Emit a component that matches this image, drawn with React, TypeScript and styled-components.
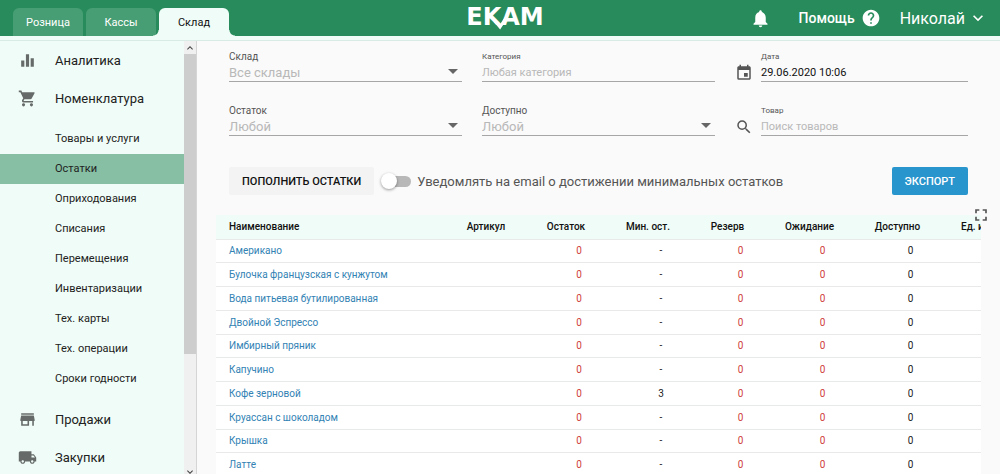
import React from "react";
import styled, { createGlobalStyle, css } from "styled-components";
import {
  MdEqualizer,
  MdEvent,
  MdFullscreen,
  MdHelp,
  MdKeyboardArrowDown,
  MdKeyboardArrowUp,
  MdLocalShipping,
  MdNotifications,
  MdSearch,
  MdShoppingCart,
  MdStore,
} from "react-icons/md";

const green = "#278b5b";
const mint = "#f0fcf7";
const line = "#e8eaea";

const GlobalStyle = createGlobalStyle`
  * { box-sizing: border-box; }
  body {
    margin: 0;
    background: #fafafa;
    color: #222;
    font-family: Roboto, "Liberation Sans", sans-serif;
    font-size: 11px;
  }
  button, input, select { font: inherit; color: inherit; }
  a { text-decoration: none; }
`;

const Page = styled.div`
  display: flex;
  flex-direction: column;
  height: 100vh;
  overflow: hidden;
`;

const Header = styled.header`
  flex: none;
  display: grid;
  grid-template-columns: 1fr auto 1fr;
  height: 36px;
  padding: 0 3px 0 13px;
  background: ${green};
  color: #fff;
`;

const Tabs = styled.nav`
  display: flex;
  align-items: flex-end;
  gap: 3px;
`;

const Tab = styled.a<{ $active?: boolean }>`
  position: relative;
  width: 70px;
  height: 28px;
  border-radius: 6px 6px 0 0;
  background: #489e74;
  color: #fff;
  font-size: 11px;
  line-height: 29px;
  text-align: center;

  ${(p) =>
    p.$active &&
    css`
      background: ${mint};
      color: #111;

      &::before,
      &::after {
        content: "";
        position: absolute;
        bottom: 0;
        width: 6px;
        height: 6px;
      }
      &::before {
        right: 100%;
        background: radial-gradient(circle at 0 0, transparent 5px, ${mint} 6px);
      }
      &::after {
        left: 100%;
        background: radial-gradient(circle at 100% 0, transparent 5px, ${mint} 6px);
      }
    `}
`;

const Logo = styled.a`
  position: relative;
  color: #fff;
  font-family: "DejaVu Sans", sans-serif;
  font-size: 24px;
  font-weight: 700;
  line-height: 34px;

  svg {
    position: absolute;
    left: 26px;
    top: 17px;
  }
`;

const Account = styled.div`
  display: flex;
  align-items: center;
  justify-content: flex-end;
  gap: 1px;
`;

const HeaderButton = styled.button<{ $bold?: boolean; $size?: number; $gap?: number; $pad?: number }>`
  display: flex;
  align-items: center;
  gap: ${(p) => p.$gap ?? 0}px;
  height: 36px;
  padding: 0 ${(p) => p.$pad ?? 9}px;
  border: 0;
  background: none;
  font-size: ${(p) => p.$size ?? 14}px;
  font-weight: ${(p) => (p.$bold ? 500 : 400)};
`;

const Strip = styled.div`
  flex: none;
  height: 5px;
  background: ${mint};
  border-bottom: 1px solid #d8ebe4;
`;

const Body = styled.div`
  flex: 1;
  display: flex;
  min-height: 0;
`;

const Sidebar = styled.nav`
  flex: none;
  width: 184px;
  overflow: hidden;
  background: ${mint};
`;

const Section = styled.a`
  display: flex;
  align-items: center;
  gap: 18px;
  height: 38px;
  padding-left: 18px;
  color: #222;
  font-size: 13px;

  svg { flex: none; color: #666b69; }
`;

const SubList = styled.div`
  padding: 7px 0 6px;
`;

const SubItem = styled.a<{ $active?: boolean }>`
  display: block;
  padding-left: 55px;
  background: ${(p) => (p.$active ? "#86bfa3" : "none")};
  color: #222;
  font-size: 11px;
  line-height: 30px;
`;

const ScrollBar = styled.div`
  flex: none;
  display: flex;
  flex-direction: column;
  width: 13px;
  background: #f0f0f0;
  border-right: 1px solid #d4d6d5;
  color: #444;
`;

const ScrollArrow = styled.span`
  display: flex;
  justify-content: center;
  align-items: center;
  height: 13px;

  &:last-child { height: 4px; }
`;

const ScrollThumb = styled.span`
  height: 300px;
  margin-bottom: auto;
  background: #cdcdcd;
`;

const Main = styled.main`
  flex: 1;
  min-width: 0;
  overflow-y: auto;
  scrollbar-width: none;
`;

const Filters = styled.form`
  display: grid;
  grid-template-columns: repeat(3, 1fr);
  gap: 13px 20px;
  padding: 0 32px;
`;

const FieldBox = styled.div`
  display: flex;
  align-items: flex-end;
  gap: 8px;
  height: 41px;

  > svg { flex: none; color: #555; }
`;

const FieldBody = styled.div`
  position: relative;
  flex: 1;
  display: flex;
  flex-direction: column;
  min-width: 0;
  border-bottom: 1px solid #a6a6a6;
`;

const FieldLabel = styled.label<{ $small?: boolean }>`
  color: #555;
  font-size: ${(p) => (p.$small ? 8 : 10)}px;
  line-height: 14px;
`;

const controlStyle = css`
  width: 100%;
  height: 17px;
  padding: 0;
  border: 0;
  outline: 0;
  background: none;
`;

const TextInput = styled.input`
  ${controlStyle}
  color: #111;
  font-size: 11px;

  &::placeholder { color: #b8b8b8; opacity: 1; }
`;

const Select = styled.select`
  ${controlStyle}
  appearance: none;
  color: #b8b8b8;
  font-size: 13px;
`;

const Caret = styled.span`
  position: absolute;
  right: 4px;
  bottom: 7px;
  border: 5px solid transparent;
  border-top-color: #666;
  border-bottom: 0;
  pointer-events: none;
`;

const Actions = styled.div`
  display: flex;
  align-items: center;
  padding: 31px 32px 20px;
`;

const Button = styled.button<{ $primary?: boolean }>`
  height: 28px;
  padding: 0 13px;
  border: 0;
  border-radius: 2px;
  background: ${(p) => (p.$primary ? "#2895cd" : "#f3f3f3")};
  color: ${(p) => (p.$primary ? "#fff" : "#111")};
  font-size: 11px;
  font-weight: 500;
`;

const SwitchLabel = styled.label`
  flex: 1;
  display: flex;
  align-items: center;
  gap: 6px;
  padding-left: 11px;
  color: #555;
  font-size: 13px;
`;

const Switch = styled.input`
  appearance: none;
  position: relative;
  width: 26px;
  height: 11px;
  margin: 0;
  border-radius: 6px;
  background: #b8b8b8;

  &::before {
    content: "";
    position: absolute;
    left: -4px;
    top: -3px;
    width: 16px;
    height: 16px;
    border-radius: 50%;
    background: #fff;
    box-shadow: 0 1px 3px rgba(0, 0, 0, 0.4);
  }
`;

const TableArea = styled.section`
  position: relative;
  margin: 0 19px;
`;

const TableClip = styled.div`
  overflow: hidden;
`;

const FullscreenButton = styled.button`
  position: absolute;
  right: -10px;
  top: -10px;
  display: flex;
  padding: 0;
  border: 0;
  background: none;
  color: #555;
`;

const Table = styled.table`
  width: calc(100% + 45px);
  table-layout: fixed;
  border-collapse: collapse;
  background: #fff;
  white-space: nowrap;
`;

const HeadCell = styled.th<{ $start?: number }>`
  height: 24px;
  padding: 0 0 0 ${(p) => p.$start ?? 0}px;
  border-bottom: 1px solid ${line};
  background: ${mint};
  color: #111;
  font-size: 10px;
  font-weight: 500;
  text-align: ${(p) => (p.$start ? "left" : "center")};
`;

const Row = styled.tr`
  height: 24px;

  &:nth-child(4n + 1) { height: 23px; }
`;

const Cell = styled.td<{ $alert?: boolean }>`
  padding: 0 0 0 26px;
  border-bottom: 1px solid ${line};
  color: ${(p) => (p.$alert ? "#d0413c" : "#222")};
  font-size: 10px;
  text-align: center;
`;

const NameCell = styled(Cell)`
  padding-left: 13px;
  text-align: left;
`;

const ProductLink = styled.a`
  color: #3282b4;
`;

const subItems = [
  "Товары и услуги",
  "Остатки",
  "Оприходования",
  "Списания",
  "Перемещения",
  "Инвентаризации",
  "Тех. карты",
  "Тех. операции",
  "Сроки годности",
];

const products = [
  { name: "Американо", min: "-" },
  { name: "Булочка французская с кунжутом", min: "-" },
  { name: "Вода питьевая бутилированная", min: "-" },
  { name: "Двойной Эспрессо", min: "-" },
  { name: "Имбирный пряник", min: "-" },
  { name: "Капучино", min: "-" },
  { name: "Кофе зерновой", min: "3" },
  { name: "Круассан с шоколадом", min: "-" },
  { name: "Крышка", min: "-" },
  { name: "Латте", min: "-" },
];

const columnWidths = [80, 80, 84, 75, 89, 87, 85];

function SelectField({ id, label, value }: { id: string; label: string; value: string }) {
  return (
    <FieldBox>
      <FieldBody>
        <FieldLabel htmlFor={id}>{label}</FieldLabel>
        <Select id={id}>
          <option>{value}</option>
        </Select>
        <Caret />
      </FieldBody>
    </FieldBox>
  );
}

type InputFieldProps = {
  id: string;
  label: string;
  icon?: React.ReactNode;
  placeholder?: string;
  defaultValue?: string;
};

function InputField({ id, label, icon, ...rest }: InputFieldProps) {
  return (
    <FieldBox>
      {icon}
      <FieldBody>
        <FieldLabel htmlFor={id} $small>{label}</FieldLabel>
        <TextInput id={id} {...rest} />
      </FieldBody>
    </FieldBox>
  );
}

export default function App() {
  return (
    <Page>
      <GlobalStyle />
      <Header>
        <Tabs>
          <Tab href="#retail">Розница</Tab>
          <Tab href="#registers">Кассы</Tab>
          <Tab href="#stock" $active>Склад</Tab>
        </Tabs>
        <Logo href="#home">
          EKAM
          <svg width="18" height="13" viewBox="0 0 18 13" fill="none" stroke="#fff" strokeWidth="3">
            <path d="M3 4L8 10L14 1" />
          </svg>
        </Logo>
        <Account>
          <HeaderButton aria-label="Уведомления" $pad={18}><MdNotifications size={21} /></HeaderButton>
          <HeaderButton $bold $gap={6}>Помощь <MdHelp size={20} /></HeaderButton>
          <HeaderButton $size={16} $gap={3}>Николай <MdKeyboardArrowDown size={20} /></HeaderButton>
        </Account>
      </Header>
      <Strip />
      <Body>
        <Sidebar>
          <Section href="#analytics"><MdEqualizer size={19} />Аналитика</Section>
          <Section href="#items"><MdShoppingCart size={19} />Номенклатура</Section>
          <SubList>
            {subItems.map((item) => (
              <SubItem key={item} href="#items" $active={item === "Остатки"}>{item}</SubItem>
            ))}
          </SubList>
          <Section href="#sales"><MdStore size={19} />Продажи</Section>
          <Section href="#purchases"><MdLocalShipping size={19} />Закупки</Section>
        </Sidebar>
        <ScrollBar aria-hidden>
          <ScrollArrow><MdKeyboardArrowUp size={12} /></ScrollArrow>
          <ScrollThumb />
          <ScrollArrow><MdKeyboardArrowDown size={12} /></ScrollArrow>
        </ScrollBar>
        <Main>
          <Filters>
            <SelectField id="store" label="Склад" value="Все склады" />
            <InputField id="category" label="Категория" placeholder="Любая категория" />
            <InputField id="date" label="Дата" defaultValue="29.06.2020 10:06" icon={<MdEvent size={18} />} />
            <SelectField id="rest" label="Остаток" value="Любой" />
            <SelectField id="available" label="Доступно" value="Любой" />
            <InputField id="product" label="Товар" placeholder="Поиск товаров" icon={<MdSearch size={18} />} />
          </Filters>
          <Actions>
            <Button>ПОПОЛНИТЬ ОСТАТКИ</Button>
            <SwitchLabel>
              <Switch type="checkbox" role="switch" />
              Уведомлять на email о достижении минимальных остатков
            </SwitchLabel>
            <Button $primary>ЭКСПОРТ</Button>
          </Actions>
          <TableArea>
            <TableClip>
              <Table>
                <colgroup>
                  <col />
                  {columnWidths.map((width, i) => <col key={i} width={width} />)}
                </colgroup>
                <thead>
                  <tr>
                    <HeadCell $start={13}>Наименование</HeadCell>
                    <HeadCell>Артикул</HeadCell>
                    <HeadCell>Остаток</HeadCell>
                    <HeadCell>Мин. ост.</HeadCell>
                    <HeadCell>Резерв</HeadCell>
                    <HeadCell>Ожидание</HeadCell>
                    <HeadCell>Доступно</HeadCell>
                    <HeadCell $start={20}>Ед. изм.</HeadCell>
                  </tr>
                </thead>
                <tbody>
                  {products.map(({ name, min }) => (
                    <Row key={name}>
                      <NameCell><ProductLink href="#product">{name}</ProductLink></NameCell>
                      <Cell />
                      <Cell $alert>0</Cell>
                      <Cell>{min}</Cell>
                      <Cell $alert>0</Cell>
                      <Cell $alert>0</Cell>
                      <Cell>0</Cell>
                      <Cell />
                    </Row>
                  ))}
                </tbody>
              </Table>
            </TableClip>
            <FullscreenButton aria-label="На весь экран"><MdFullscreen size={20} /></FullscreenButton>
          </TableArea>
        </Main>
      </Body>
    </Page>
  );
}
